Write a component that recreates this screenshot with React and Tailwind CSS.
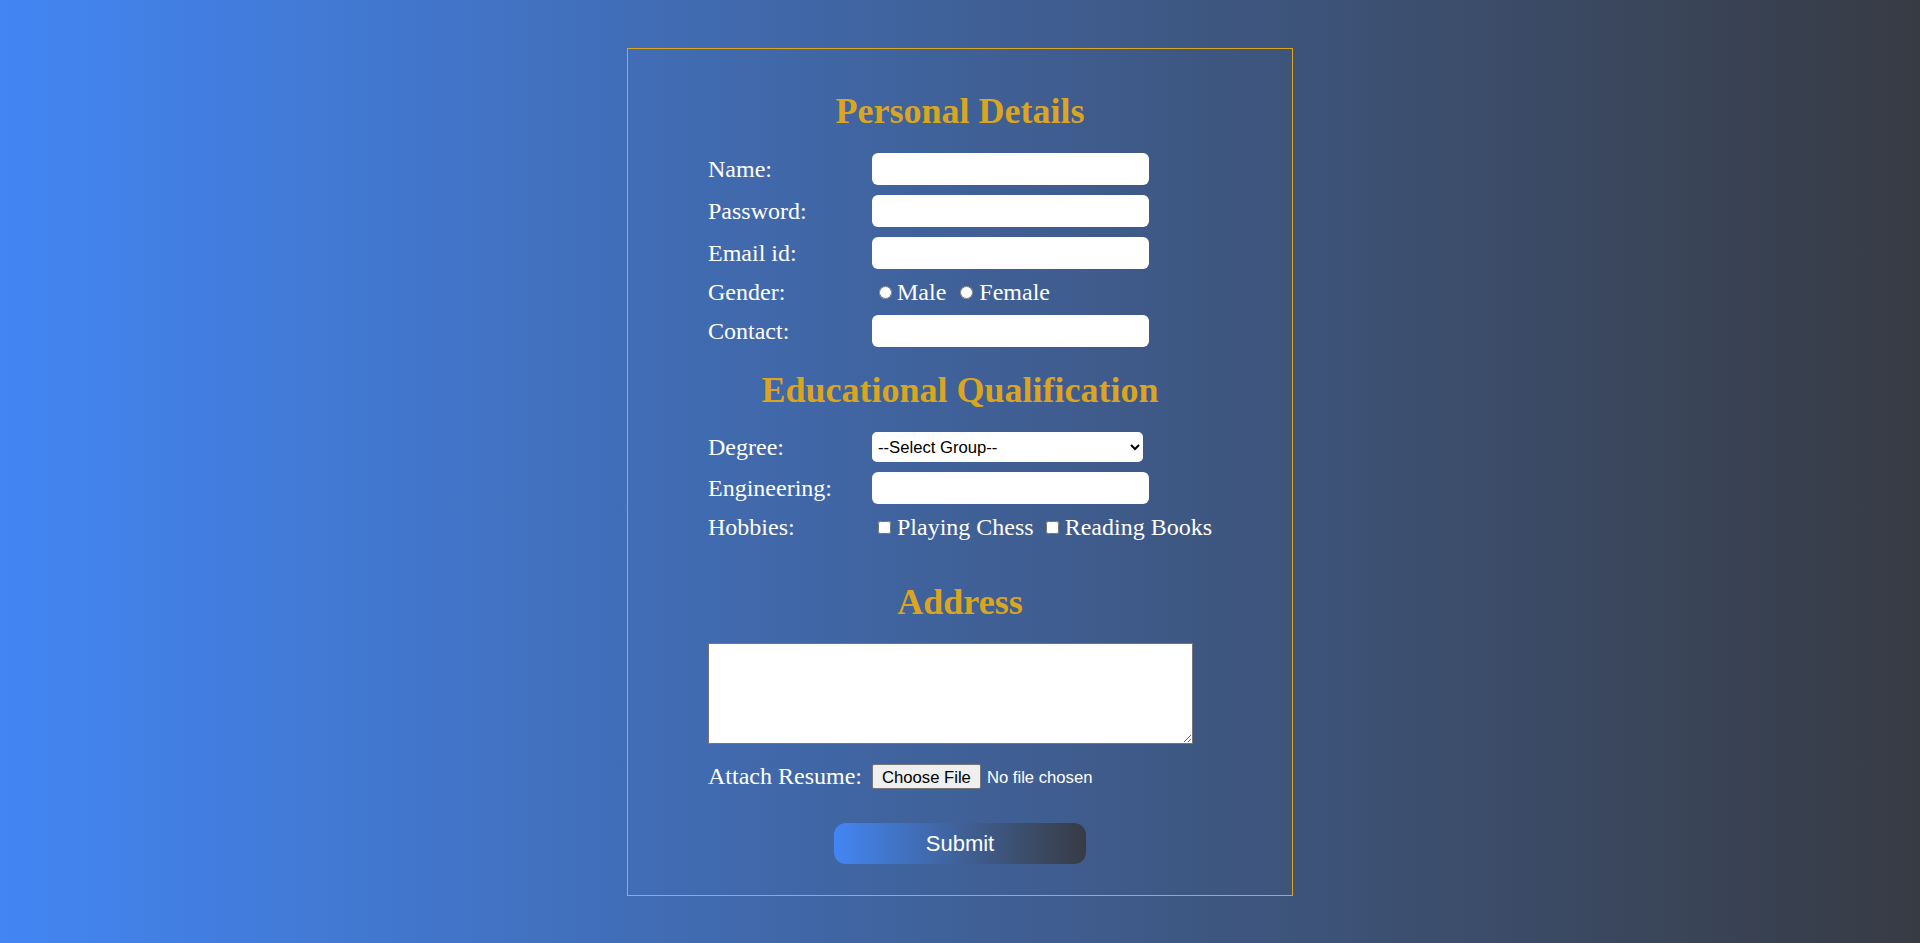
import React from "react";

const serif = "font-['Liberation_Serif','Times_New_Roman',serif]";
const sans = "font-['Liberation_Sans',Arial,sans-serif]";

const Heading = ({ children, className = "" }) => (
  <h2 className={`text-center text-[36px] leading-[41px] font-bold text-[#daa520] ${className}`}>
    {children}
  </h2>
);

const Label = ({ children }) => (
  <label className="text-[24px] leading-[26px] text-white whitespace-nowrap">{children}</label>
);

const TextInput = ({ type = "text" }) => (
  <input
    type={type}
    className={`w-[277px] h-[32px] rounded-[6px] bg-white px-[6px] text-[16.67px] text-black outline-none ${sans}`}
  />
);

const App = () => {
  return (
    <div className={`min-h-screen w-full bg-gradient-to-r from-[#4286f4] to-[#373b44] pt-[48px] pb-[46px] ${serif}`}>
      <form
        className="mx-auto w-[666px] border border-[#daa520] px-[80px] pt-[42px] pb-[31px]"
        onSubmit={(e) => e.preventDefault()}
      >
        {/* Personal details */}
        <Heading>Personal Details</Heading>
        <div className="mt-[21px] grid grid-cols-[164px_1fr] gap-y-[10px] items-center">
          <Label>Name:</Label>
          <div className="h-[32px] flex items-center">
            <TextInput />
          </div>
          <Label>Password:</Label>
          <div className="h-[32px] flex items-center">
            <TextInput type="password" />
          </div>
          <Label>Email id:</Label>
          <div className="h-[32px] flex items-center">
            <TextInput type="email" />
          </div>
          <Label>Gender:</Label>
          <div className="h-[26px] flex items-center text-[24px] text-white whitespace-nowrap">
            <input type="radio" name="gender" className="ml-[7px] w-[13px] h-[13px]" />
            <span className="ml-[5px]">Male</span>
            <input type="radio" name="gender" className="ml-[14px] w-[13px] h-[13px]" />
            <span className="ml-[6px]">Female</span>
          </div>
          <Label>Contact:</Label>
          <div className="h-[32px] flex items-center">
            <TextInput type="tel" />
          </div>
        </div>

        {/* Education */}
        <Heading className="mt-[23px]">Educational Qualification</Heading>
        <div className="mt-[21px] grid grid-cols-[164px_1fr] gap-y-[10px] items-center">
          <Label>Degree:</Label>
          <div className="h-[30px] flex items-center">
            <select
              defaultValue=""
              className={`w-[271px] h-[30px] rounded-[5px] bg-white pl-[2px] text-[16.67px] text-black ${sans}`}
            >
              <option value="">--Select Group--</option>
              <option>B.E.</option>
              <option>B.Tech</option>
              <option>M.E.</option>
              <option>M.Tech</option>
            </select>
          </div>
          <Label>Engineering:</Label>
          <div className="h-[32px] flex items-center">
            <TextInput />
          </div>
          <Label>Hobbies:</Label>
          <div className="h-[26px] flex items-center text-[24px] text-white whitespace-nowrap">
            <input type="checkbox" className="ml-[6px] w-[13px] h-[13px]" />
            <span className="ml-[6px]">Playing Chess</span>
            <input type="checkbox" className="ml-[12px] w-[13px] h-[13px]" />
            <span className="ml-[6px]">Reading Books</span>
          </div>
        </div>

        {/* Address */}
        <Heading className="mt-[42px]">Address</Heading>
        <textarea className="mt-[20px] block w-[485px] h-[101px] border border-[#767676] bg-white p-[2px] text-black resize" />

        <div className="mt-[19px] mb-[1px] grid grid-cols-[164px_1fr] items-center h-[25px]">
          <Label>Attach Resume:</Label>
          <div className="h-[25px] flex items-center">
            <input
              type="file"
              className={`h-[25px] text-[16.67px] leading-[25px] text-white ${sans} file:h-[25px] file:mr-[6px] file:px-[9px] file:rounded-[2px] file:border file:border-[#767676] file:bg-[#efefef] file:text-black`}
            />
          </div>
        </div>

        <button
          type="submit"
          className={`mt-[35px] mx-auto block w-[252px] h-[41px] rounded-[12px] bg-gradient-to-r from-[#4286f4] to-[#373b44] text-[22px] text-white ${sans}`}
        >
          Submit
        </button>
      </form>
    </div>
  );
};

export default App;
